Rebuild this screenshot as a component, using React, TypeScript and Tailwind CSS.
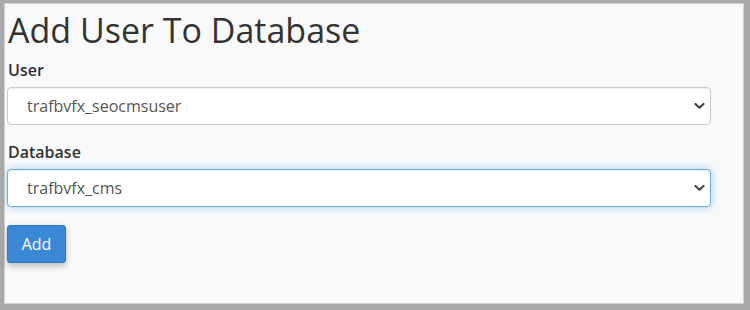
import React from 'react';

const Chevron: React.FC = () => (
  <svg
    className="pointer-events-none absolute right-[6px] top-1/2 -translate-y-1/2"
    width="11"
    height="7"
    viewBox="0 0 11 7"
    fill="none"
  >
    <path d="M1.5 1.5 L5.5 5.2 L9.5 1.5" stroke="#444" strokeWidth="2.2" strokeLinecap="round" strokeLinejoin="round" />
  </svg>
);

interface SelectProps {
  value: string;
  focused?: boolean;
}

const SelectBox: React.FC<SelectProps> = ({ value, focused }) => (
  <div className="relative w-[704px]">
    <select
      defaultValue={value}
      className={
        'block h-[38px] w-full appearance-none rounded-[4px] border bg-white pl-[19px] pr-8 text-[16px] text-[#555] outline-none ' +
        (focused
          ? 'border-[#66afe9] shadow-[inset_0_1px_1px_rgba(0,0,0,0.075),0_0_8px_rgba(102,175,233,0.6)]'
          : 'border-[#cccccc] shadow-[inset_0_1px_1px_rgba(0,0,0,0.075)]')
      }
    >
      <option value={value}>{value}</option>
    </select>
    <Chevron />
  </div>
);

export default function App() {
  return (
    <div className="h-[310px] w-[750px] bg-[#a9a9a9] pb-[6px] pl-[4px] pr-[6px] pt-[3px] font-['Open_Sans',sans-serif]">
      <div className="h-full w-full border border-[#d2d2d2] bg-[#f9f9f9] px-[2px]">
        <h1 className="mt-[6px] pl-[1px] text-[34px] font-normal leading-[40px] text-[#333]">Add User To Database</h1>

        <label className="mt-[10px] block pl-[1px] text-[16px] font-semibold leading-[20px] text-[#333]">User</label>
        <div className="mt-[7px]">
          <SelectBox value="trafbvfx_seocmsuser" />
        </div>

        <label className="mt-[17px] block pl-[1px] text-[16px] font-semibold leading-[20px] text-[#333]">Database</label>
        <div className="mt-[7px]">
          <SelectBox value="trafbvfx_cms" focused />
        </div>

        <button className="mt-[18px] h-[38px] w-[59px] rounded-[3px] border border-[#2f78c0] bg-[#3a88d5] text-[16px] text-white shadow-[0_3px_6px_rgba(0,0,0,0.25)]">
          Add
        </button>
      </div>
    </div>
  );
}
